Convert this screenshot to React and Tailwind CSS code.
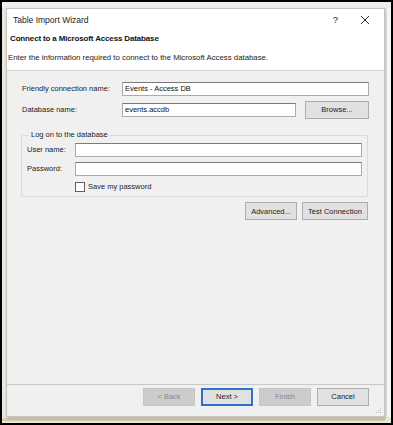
import React from 'react';

const font = { fontFamily: '"Liberation Sans", Arial, sans-serif' };

function Btn({ children, w = 'w-[52px]', disabled, primary }) {
  let cls = 'border-[#adadad] bg-[#e1e1e1] text-[#1a1a1a]';
  if (disabled) cls = 'border-[#c6c6c6] bg-[#cccccc] text-[#8a8a8a]';
  if (primary) cls = 'border-[#2d73c9] bg-[#e1e1e1] text-[#1a1a1a] shadow-[inset_0_0_0_1px_#2d73c9]';
  return (
    <div className={`flex h-[18px] items-center justify-center whitespace-nowrap border ${w} ${cls} text-[7.5px]`}>
      {children}
    </div>
  );
}

function Input({ value, w = 'flex-1' }) {
  return (
    <div className={`flex h-[14px] items-center border border-[#a9abb2] border-t-[#7a7a7a] bg-white pl-[2px] text-[7.5px] text-[#111] ${w}`}>
      {value}
    </div>
  );
}

export default function App() {
  return (
    <div className="h-[425px] w-[393px] border-2 border-black bg-[#ebe8e1]" style={font}>
      <div className="h-[6px] bg-[#eeeeee]" />
      <div className="flex">
        <div className="w-[4px]" />
        <div className="flex h-[409px] w-[379px] flex-col border border-[#c3c3c3] bg-[#f0f0f0] shadow-[1px_2px_3px_rgba(120,100,50,0.35)]">
          <div className="h-[62px] border-b border-[#d4d4d4] bg-white">
            <div className="flex h-[22px] items-center pl-[6px] text-[8.5px] text-[#222]">
              <span>Table Import Wizard</span>
              <span className="ml-auto mr-[22px] text-[9.5px]">?</span>
              <svg width="10" height="10" viewBox="0 0 10 10" className="mr-[14px]">
                <path d="M1 1 L9 9 M9 1 L1 9" stroke="#333" strokeWidth="1" />
              </svg>
            </div>
            <div className="flex h-[16px] items-center whitespace-nowrap pl-[3px] text-[8px] font-bold tracking-[-0.15px] text-[#111]">
              Connect to a Microsoft Access Database
            </div>
            <div className="flex h-[22px] items-center whitespace-nowrap pl-[1px] text-[7.8px] text-[#222]">
              Enter the information required to connect to the Microsoft Access database.
            </div>
          </div>

          <div className="flex flex-1 flex-col whitespace-nowrap px-[15px] text-[7.5px] text-[#222]">
            <div className="mt-[11px] flex items-center">
              <span className="w-[100px]">Friendly connection name:</span>
              <Input value="Events - Access DB" />
            </div>
            <div className="mt-[5px] flex items-center">
              <span className="w-[100px]">Database name:</span>
              <Input value="events.accdb" w="w-[174px]" />
              <div className="ml-auto">
                <Btn w="w-[64px]">Browse...</Btn>
              </div>
            </div>

            <fieldset className="mt-[10px] ml-[-1px] mr-[1px] rounded-[2px] border border-[#d9d9d9] pb-[4px] pl-[5px] pr-[5px] pt-[2px]">
              <legend className="ml-[2px] px-[2px] leading-[12px]">Log on to the database</legend>
              <div className="flex items-center">
                <span className="w-[48px]">User name:</span>
                <Input />
              </div>
              <div className="mt-[5px] flex items-center">
                <span className="w-[48px]">Password:</span>
                <Input />
              </div>
              <div className="mt-[5px] flex items-center pl-[48px]">
                <div className="h-[10px] w-[10px] border border-[#5e5e5e] bg-white" />
                <span className="ml-[3px]">Save my password</span>
              </div>
            </fieldset>

            <div className="mt-[5px] mr-[1px] flex justify-end gap-[5px]">
              <Btn>Advanced...</Btn>
              <Btn w="w-[66px]">Test Connection</Btn>
            </div>
          </div>

          <div className="relative flex h-[32px] justify-end gap-[6px] border-t border-[#c9c9c9] px-[15px] pt-[3px]">
            <Btn disabled>&lt; Back</Btn>
            <Btn primary>Next &gt;</Btn>
            <Btn disabled>Finish</Btn>
            <Btn>Cancel</Btn>
            <svg width="8" height="8" viewBox="0 0 8 8" className="absolute bottom-[2px] right-[2px]">
              <rect x="6" y="2" width="1" height="1" fill="#bbb" />
              <rect x="4" y="4" width="1" height="1" fill="#bbb" />
              <rect x="6" y="4" width="1" height="1" fill="#bbb" />
              <rect x="2" y="6" width="1" height="1" fill="#bbb" />
              <rect x="4" y="6" width="1" height="1" fill="#bbb" />
              <rect x="6" y="6" width="1" height="1" fill="#bbb" />
            </svg>
          </div>
        </div>
        <div className="ml-[2px] w-[4px] bg-[#f5f5f5]" />
      </div>
      <div className="mt-[1px] h-[3px] w-[383px] bg-[#d8cfb0]" />
    </div>
  );
}
